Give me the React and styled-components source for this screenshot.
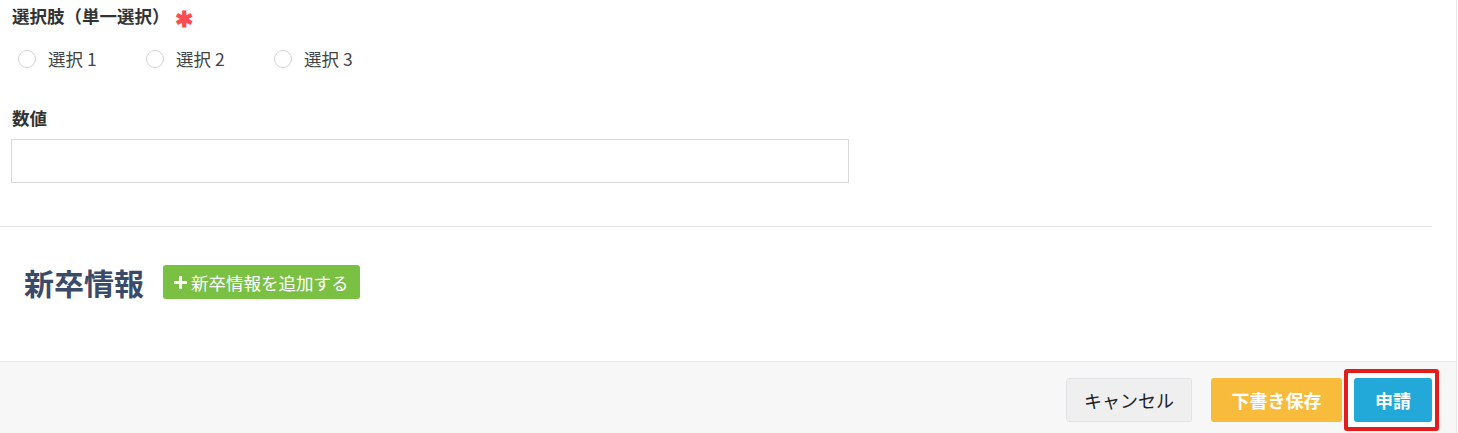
import React from 'react'
import styled, { createGlobalStyle } from 'styled-components'

const GlobalStyle = createGlobalStyle`
  body {
    margin: 0;
    background: #fff;
    font-family: "Noto Sans CJK JP", "Noto Sans", sans-serif;
    color: #333;
  }
`

const Page = styled.div`
  width: 1456px;
  height: 433px;
  border-right: 1px solid #e4e6ea;
  display: flex;
  flex-direction: column;
  overflow: hidden;
`

const Form = styled.div`
  margin-right: 24px;
  padding: 4px 0 43px 11px;
  border-bottom: 1px solid #e6e6e6;
`

const Field = styled.div`
  margin-bottom: ${props => props.last ? '0' : '36px'};
`

const Label = styled.div`
  display: flex;
  align-items: center;
  font-size: 17.5px;
  font-weight: 700;
  line-height: 22px;
  color: #333;
  padding-left: 1px;
`

const Required = styled.span`
  color: #ff4d4f;
  font-size: 22px;
  line-height: 22px;
  margin-left: 5px;
  margin-top: 2px;
`

const RadioRow = styled.div`
  display: flex;
  margin-top: 19px;
  padding-left: 7px;
`

const RadioItem = styled.label`
  display: flex;
  align-items: center;
  width: 128px;
  font-size: 17.5px;
  color: #444;
  line-height: 24px;
`

const Circle = styled.span`
  width: 18px;
  height: 18px;
  border: 1px solid #d4d4d4;
  border-radius: 50%;
  box-sizing: border-box;
  margin-right: 12px;
  background: #fff;
`

const Input = styled.input`
  display: block;
  margin-top: 10px;
  width: 838px;
  height: 44px;
  box-sizing: border-box;
  border: 1px solid #d9d9d9;
  outline: none;
`

const Section = styled.div`
  flex: 1;
  display: flex;
  align-items: flex-start;
  padding: 38px 0 0 24px;
`

const Heading = styled.h2`
  margin: 0;
  font-size: 30px;
  font-weight: 700;
  line-height: 34px;
  color: #3b4a69;
`

const AddButton = styled.button`
  margin-left: 19px;
  height: 34px;
  padding: 0 11px;
  border: none;
  border-radius: 3px;
  background: #7ac143;
  color: #fff;
  font-family: inherit;
  font-size: 17.5px;
  display: flex;
  align-items: center;
  gap: 4px;
`

const Footer = styled.div`
  height: 72px;
  box-sizing: border-box;
  border-top: 1px solid #e6e6ea;
  background: #f7f7f7;
  display: flex;
  justify-content: flex-end;
  align-items: flex-start;
  padding: 16px 24px 0 0;
  gap: 19px;
`

const Button = styled.button`
  position: relative;
  height: 44px;
  width: ${props => props.w}px;
  padding: 0;
  box-sizing: border-box;
  border-radius: 3px;
  font-family: inherit;
  font-size: 18px;
  font-weight: ${props => props.variant === 'cancel' ? 400 : 700};
  color: ${props => props.variant === 'cancel' ? '#222' : '#fff'};
  background: ${props => ({ cancel: '#efefef', draft: '#f9bb3b', submit: '#22a8d9' }[props.variant])};
  border: 1px solid ${props => props.variant === 'cancel' ? '#e2e4e8' : 'transparent'};
`

const SubmitWrap = styled.div`
  position: relative;
  margin-left: -7px;
`

// red annotation frame drawn over the submit button
const Highlight = styled.div`
  position: absolute;
  left: -10px;
  right: -7px;
  top: -9px;
  bottom: -9px;
  border: 4px solid #e41c1c;
  border-radius: 3px;
  background: #fff;
`

const Plus = () => (
  <svg width="13" height="13" viewBox="0 0 13 13">
    <path d="M5 0h3v5h5v3H8v5H5V8H0V5h5z" fill="#fff" />
  </svg>
)

const App = () => {
  return (
    <>
      <GlobalStyle />
      <Page>
        <Form>
          <Field>
            <Label>
              選択肢（単一選択）
              <Required>✱</Required>
            </Label>
            <RadioRow>
              {['選択 1', '選択 2', '選択 3'].map(t => (
                <RadioItem key={t}>
                  <Circle />
                  {t}
                </RadioItem>
              ))}
            </RadioRow>
          </Field>
          <Field last>
            <Label>数値</Label>
            <Input type="text" />
          </Field>
        </Form>
        <Section>
          <Heading>新卒情報</Heading>
          <AddButton>
            <Plus />
            新卒情報を追加する
          </AddButton>
        </Section>
        <Footer>
          <Button variant="cancel" w={126}>キャンセル</Button>
          <Button variant="draft" w={131}>下書き保存</Button>
          <SubmitWrap>
            <Highlight />
            <Button variant="submit" w={78}>申請</Button>
          </SubmitWrap>
        </Footer>
      </Page>
    </>
  )
}

export default App
